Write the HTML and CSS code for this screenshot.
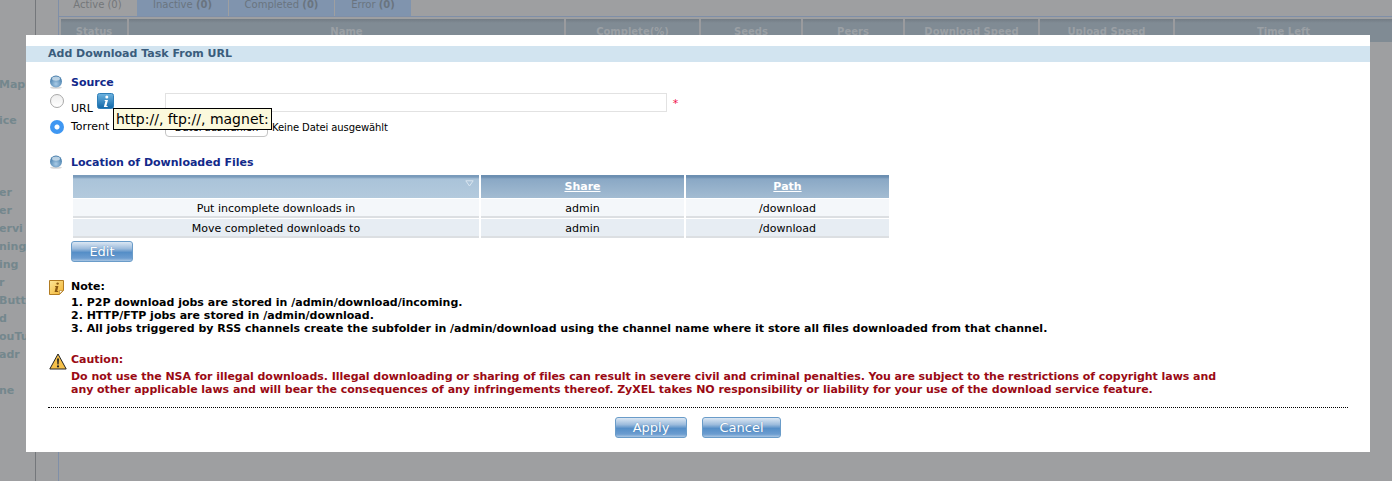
FILE: index.html
```html
<!DOCTYPE html>
<html lang="en">
<head>
  <meta charset="UTF-8" />
  <title>Add Download Task From URL</title>
  <link rel="stylesheet" href="styles.css">
</head>
<body>

<!-- dimmed page behind the dialog -->
<div class="backdrop">
  <div class="side">
    <div class="side-row"></div>
    <div class="side-row"></div>
    <div class="side-row"></div>
    <div class="side-row"></div>
    <div class="side-row">Mapp</div>
    <div class="side-row"></div>
    <div class="side-row">ice</div>
    <div class="side-row"></div>
    <div class="side-row"></div>
    <div class="side-row"></div>
    <div class="side-row">er</div>
    <div class="side-row">er</div>
    <div class="side-row">ervi</div>
    <div class="side-row">ning</div>
    <div class="side-row">ing</div>
    <div class="side-row">r</div>
    <div class="side-row">Butt</div>
    <div class="side-row">d</div>
    <div class="side-row">ouTu</div>
    <div class="side-row">adr</div>
    <div class="side-row"></div>
    <div class="side-row">ne</div>
  </div>
  <div class="main">
    <div class="tabs">
      <div class="tab tab-active">Active (0)</div>
      <div class="tab tab-inactive">Inactive <b>(0)</b></div>
      <div class="tab tab-completed">Completed <b>(0)</b></div>
      <div class="tab tab-error">Error <b>(0)</b></div>
    </div>
    <div class="jobs-head">
      <div class="col-status">Status</div>
      <div class="col-name">Name</div>
      <div class="col-complete">Complete(%)</div>
      <div class="col-seeds">Seeds</div>
      <div class="col-peers">Peers</div>
      <div class="col-speed">Download Speed</div>
      <div class="col-speed">Upload Speed</div>
      <div class="col-left">Time Left</div>
    </div>
  </div>
</div>

<div class="dialog">
  <h1 class="dialog-title">Add Download Task From URL</h1>

  <div class="section-head section-source">
    <svg class="bullet" width="14" height="14" viewBox="0 0 14 14"><use href="#ball"/></svg>
    <span>Source</span>
  </div>

  <div class="field-row row-url">
    <input class="radio" type="radio" name="src" />
    <label class="field-label">URL</label>
    <svg class="info-icon" width="17" height="17" viewBox="0 0 17 17">
      <defs>
        <linearGradient id="infoBg" x1="0" y1="0" x2="0" y2="1">
          <stop offset="0" stop-color="#6fb4e0"/>
          <stop offset="1" stop-color="#0f66a8"/>
        </linearGradient>
      </defs>
      <rect x="0.5" y="0.5" width="16" height="15" rx="2" fill="url(#infoBg)" stroke="#2f7fb8"/>
      <circle cx="9.8" cy="4" r="1.5" fill="#fff"/>
      <path d="M8 7h3l-1.6 6h1.2v1H6.8l1.7-6H7.4z" fill="#fff"/>
    </svg>
    <input class="url-input" type="text" />
    <span class="required">*</span>
  </div>

  <div class="field-row row-torrent">
    <input class="radio" type="radio" name="src" checked />
    <label class="field-label">Torrent File</label>
    <button class="file-btn">Datei auswählen</button>
    <span class="file-name">Keine Datei ausgewählt</span>
  </div>

  <div class="tooltip">http://, ftp://, magnet:</div>

  <div class="section-head section-location">
    <svg class="bullet" width="14" height="14" viewBox="0 0 14 14">
      <defs>
        <radialGradient id="ballFill" cx="50%" cy="70%" r="65%">
          <stop offset="0" stop-color="#a9cbe6"/>
          <stop offset="1" stop-color="#3f78a8"/>
        </radialGradient>
        <g id="ball">
          <ellipse cx="7" cy="12.6" rx="6" ry="1.2" fill="#d8d8d8"/>
          <circle cx="7" cy="6.5" r="6" fill="url(#ballFill)"/>
          <ellipse cx="7" cy="3.6" rx="4" ry="2.2" fill="#dbe8f2" opacity="0.75"/>
        </g>
      </defs>
      <use href="#ball"/>
    </svg>
    <span>Location of Downloaded Files</span>
  </div>

  <table class="locations">
    <thead>
      <tr>
        <th class="th-sorted">
          <svg class="sort-arrow" width="9" height="7" viewBox="0 0 9 7"><path d="M0.8 0.8h7.4L4.5 6z" fill="none" stroke="#d9e5ef"/></svg>
        </th>
        <th><u>Share</u></th>
        <th><u>Path</u></th>
      </tr>
    </thead>
    <tbody>
      <tr class="odd"><td>Put incomplete downloads in</td><td>admin</td><td>/download</td></tr>
      <tr class="even"><td>Move completed downloads to</td><td>admin</td><td>/download</td></tr>
    </tbody>
  </table>

  <button class="blue-btn btn-edit">Edit</button>

  <div class="notice notice-note">
    <svg class="notice-icon" width="15" height="15" viewBox="0 0 15 15">
      <defs>
        <linearGradient id="noteBg" x1="0" y1="0" x2="1" y2="1">
          <stop offset="0" stop-color="#fde79a"/>
          <stop offset="1" stop-color="#f2b32e"/>
        </linearGradient>
      </defs>
      <path d="M0.5 0.5h14v10l-4 4h-10z" fill="url(#noteBg)" stroke="#b27c22"/>
      <path d="M14 10.5h-3.5V14z" fill="#fff" stroke="#b27c22" stroke-width="0.6"/>
      <circle cx="8.6" cy="3.6" r="1.2" fill="#8a5a12"/>
      <path d="M6.4 6h3l-1.2 5h1v1H5.6l1.2-5h-0.8z" fill="#8a5a12"/>
    </svg>
    <div>
      <div class="note-title">Note:</div>
      <div class="note-line">1. P2P download jobs are stored in /admin/download/incoming.</div>
      <div class="note-line">2. HTTP/FTP jobs are stored in /admin/download.</div>
      <div class="note-line">3. All jobs triggered by RSS channels create the subfolder in /admin/download using the channel name where it store all files downloaded from that channel.</div>
    </div>
  </div>

  <div class="notice notice-caution">
    <svg class="notice-icon" width="18" height="17" viewBox="0 0 18 17">
      <path d="M9 1L17.2 16H0.8z" fill="#f5c04a" stroke="#222" stroke-linejoin="round"/>
      <path d="M8 5.5h2l-0.4 6h-1.2z" fill="#222"/>
      <circle cx="9" cy="13.4" r="1.1" fill="#222"/>
    </svg>
    <div>
      <div class="caution-title">Caution:</div>
      <p class="caution-text">Do not use the NSA for illegal downloads. Illegal downloading or sharing of files can result in severe civil and criminal penalties. You are subject to the restrictions of copyright laws and<br>any other applicable laws and will bear the consequences of any infringements thereof. ZyXEL takes NO responsibility or liability for your use of the download service feature.</p>
    </div>
  </div>

  <div class="dialog-actions">
    <button class="blue-btn btn-apply">Apply</button>
    <button class="blue-btn btn-cancel">Cancel</button>
  </div>
</div>

</body>
</html>
```

FILE: styles.css
```css
* {
  box-sizing: border-box;
}

html, body {
  margin: 0;
  height: 100%;
  overflow: hidden;
}

body {
  background: #9e9fa1;
  font-family: "DejaVu Sans", Verdana, sans-serif;
  font-size: 11px;
  color: #000;
}

/* page behind the overlay */
.backdrop {
  display: flex;
  height: 481px;
}

.side {
  width: 37px;
  border-right: 1px solid #74777b;
  overflow: hidden;
  font-weight: bold;
  font-size: 11px;
  color: #74878d;
  margin-left: -1px;
}

.side-row {
  height: 18px;
  line-height: 18px;
  white-space: nowrap;
}

.side-row:first-child {
  height: 22px;
}

.main {
  margin-left: 22px;
  flex: 1;
  border-left: 1px solid #7f8fa8;
}

.tabs {
  display: flex;
  height: 17px;
  border-bottom: 1px solid #7f8fa8;
  font-size: 10px;
}

.tab {
  height: 16px;
  line-height: 10px;
  text-align: center;
  margin-right: 1px;
  background: #8094ae;
  color: #6a7480;
}

.tab-active {
  width: 77px;
  background: #9e9fa1;
  color: #74777a;
}

.tab-inactive { width: 91px; }
.tab-completed { width: 105px; }
.tab-error { width: 76px; }

.jobs-head {
  display: flex;
  height: 23px;
  margin: 2px 0 0 2px;
  background: linear-gradient(#727c85, #808b94 4px);
  color: #9ba0a5;
  font-size: 10px;
  font-weight: bold;
  line-height: 25px;
  text-align: center;
}

.jobs-head > div {
  border-right: 2px solid #9a9b9e;
}

.col-status { width: 68px; }
.col-name { width: 437px; }
.col-complete { width: 135px; }
.col-seeds { width: 102px; }
.col-peers { width: 102px; }
.col-speed { width: 135px; }
.col-left { flex: 1; border-right: 0 !important; }

/* dialog sits over the page */
.dialog {
  position: absolute;
  left: 26px;
  top: 35px;
  width: 1344px;
  height: 417px;
  background: #fff;
  padding-top: 11px;
}

.dialog-title {
  margin: 0;
  height: 16px;
  line-height: 15px;
  padding-left: 22px;
  background: #d2e4f0;
  color: #3a5c7c;
  font-size: 11px;
  font-weight: bold;
}

.section-head {
  display: flex;
  align-items: center;
  gap: 8px;
  margin-left: 23px;
  height: 14px;
  color: #12298a;
  font-weight: bold;
}

.section-source {
  margin-top: 13px;
}

.section-location {
  margin-top: 19px;
}

.field-row {
  display: flex;
  align-items: center;
  margin-left: 24px;
}

.row-url {
  height: 18px;
  margin-top: 4px;
}

.row-torrent {
  height: 18px;
  margin-top: 7px;
}

.radio {
  appearance: none;
  width: 14px;
  height: 14px;
  margin: 0 7px 0 0;
  border-radius: 50%;
  background: linear-gradient(#eee, #fff);
  border: 1px solid #a9a9a9;
  flex: none;
}

.row-url .radio {
  margin-top: -3px;
}

.radio:checked {
  border: 0;
  background: radial-gradient(circle, #fff 0 2px, #3f97f2 3px);
}

.field-label {
  line-height: 18px;
  white-space: nowrap;
}

.row-url .field-label {
  margin-top: 14px;
}

.info-icon {
  margin: -2px 0 0 4px;
}

.url-input {
  margin-left: 51px;
  width: 502px;
  height: 19px;
  border: 1px solid #e2e2e2;
  background: #fff;
}

.required {
  margin: 4px 0 0 6px;
  color: #f0104a;
  line-height: 18px;
}

.row-torrent .field-label {
  width: 94px;
}

.file-btn {
  width: 103px;
  height: 20px;
  padding: 0;
  border: 1px solid #c4c4c4;
  border-radius: 4px;
  background: #fff;
  font-family: inherit;
  font-size: 10px;
}

.file-name {
  margin-left: 4px;
  font-size: 10px;
  letter-spacing: -0.1px;
}

.tooltip {
  position: absolute;
  left: 87px;
  top: 73px;
  width: 159px;
  height: 22px;
  line-height: 21px;
  padding-left: 2px;
  border: 1px solid #000;
  background: #fbf9dc;
  font-size: 14px;
  white-space: nowrap;
}

.locations {
  width: 820px;
  margin: 6px 0 0 45px;
  border-spacing: 2px 0;
  table-layout: fixed;
  color: #000;
}

.locations th {
  width: 203px;
  height: 23px;
  padding: 0;
  background: linear-gradient(#6c8fb1, #6c8fb1 2px, #8aa8c5 4px, #a3bcd2);
  color: #fff;
  font-weight: bold;
  line-height: 23px;
}

.locations th.th-sorted {
  width: 406px;
  position: relative;
  background: linear-gradient(#7a9bbb, #7a9bbb 2px, #aac3d9 4px, #b3cadd);
}

.sort-arrow {
  position: absolute;
  right: 5px;
  top: 5px;
}

.locations td {
  height: 20px;
  padding: 1px 0 0;
  text-align: center;
  border-top: 1px solid #fff;
  border-bottom: 2px solid #dcdfe2;
}

.odd td {
  background: #f4f7fa;
}

.even td {
  background: #e7edf3;
}

.blue-btn {
  display: block;
  height: 21px;
  padding: 0;
  border: 1px solid #6a9cc9;
  border-radius: 3px;
  background: linear-gradient(#dbe7f3, #9cbbdc 35%, #558ec7 55%, #6c9dd0 85%, #a9c6e3);
  color: #fff;
  font-family: "DejaVu Sans", Verdana, sans-serif;
  font-size: 13px;
  line-height: 19px;
  text-shadow: 0 0 1px #4a7cad;
}

.btn-edit {
  width: 62px;
  margin: 3px 0 0 45px;
}

.notice {
  display: flex;
  margin-left: 23px;
  font-weight: bold;
}

.notice-note {
  margin-top: 18px;
  gap: 7px;
}

.notice-caution {
  margin-top: 18px;
  gap: 4px;
  color: #9a0a14;
}

.note-title {
  line-height: 14px;
  margin-bottom: 2px;
}

.note-line {
  line-height: 13px;
}

.caution-title {
  line-height: 14px;
  margin-bottom: 3px;
}

.caution-text {
  margin: 0;
  line-height: 13px;
  letter-spacing: -0.04px;
}

.dialog-actions {
  display: flex;
  margin: 11px 22px 0;
  padding: 9px 0 0 567px;
  border-top: 1px dotted #000;
  gap: 15px;
}

.btn-apply {
  width: 72px;
}

.btn-cancel {
  width: 79px;
}
```
